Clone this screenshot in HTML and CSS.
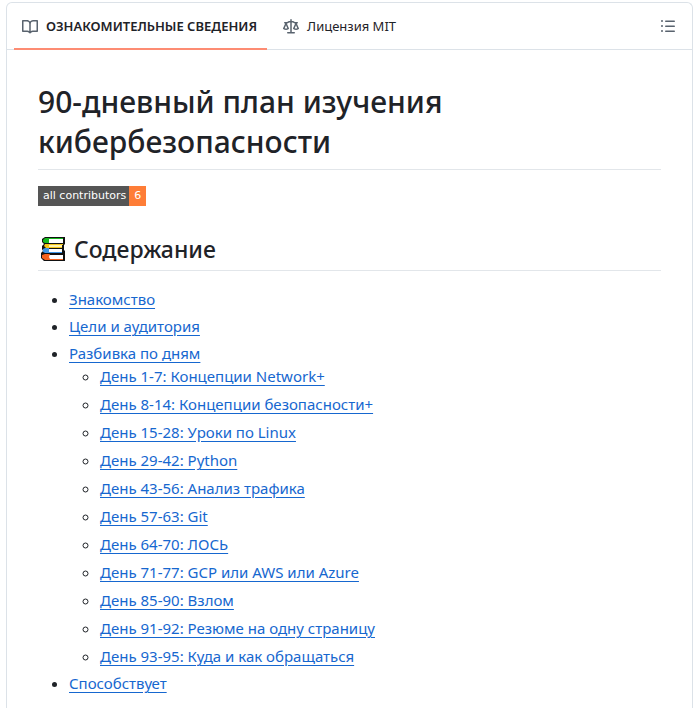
FILE: index.html
```
<!DOCTYPE html>
<html lang="ru">
<head>
    <meta charset="UTF-8">
    <meta name="viewport" content="width=device-width, initial-scale=1.0">
    <title>90-дневный план изучения кибербезопасности</title>
    <link rel="stylesheet" href="styles.css">
</head>
<body>
    <main class="readme">
        <header class="readme-header">
            <nav class="tabs">
                <a class="tab active" href="#readme">
                    <svg class="icon" viewBox="0 0 16 16" aria-hidden="true"><path d="M0 1.75A.75.75 0 0 1 .75 1h4.253c1.227 0 2.317.59 3 1.501A3.743 3.743 0 0 1 11.006 1h4.245a.75.75 0 0 1 .75.75v10.5a.75.75 0 0 1-.75.75h-4.507a2.25 2.25 0 0 0-1.591.659l-.622.621a.75.75 0 0 1-1.06 0l-.622-.621A2.25 2.25 0 0 0 5.258 13H.75a.75.75 0 0 1-.75-.75Zm7.251 10.324.004-5.073-.002-2.253A2.25 2.25 0 0 0 5.003 2.5H1.5v9h3.757a3.75 3.75 0 0 1 1.994.574ZM8.755 4.75l-.004 7.322a3.752 3.752 0 0 1 1.992-.572H14.5v-9h-3.495a2.25 2.25 0 0 0-2.25 2.25Z"/></svg>
                    <span>ОЗНАКОМИТЕЛЬНЫЕ СВЕДЕНИЯ</span>
                </a>
                <a class="tab" href="#license">
                    <svg class="icon" viewBox="0 0 16 16" aria-hidden="true"><path d="M8.75.75V2h.985c.304 0 .603.08.867.231l1.29.736c.038.022.08.033.124.033h2.234a.75.75 0 0 1 0 1.5h-.427l2.111 4.692a.75.75 0 0 1-.154.838l-.53-.53.529.531-.001.002-.002.002-.006.006-.006.005-.01.01-.045.04c-.21.176-.441.327-.686.45C14.556 10.78 13.88 11 13 11a4.498 4.498 0 0 1-2.023-.454 3.544 3.544 0 0 1-.686-.45l-.045-.04-.016-.015-.006-.006-.004-.004v-.001a.75.75 0 0 1-.154-.838L12.178 4.5h-.162c-.305 0-.604-.079-.868-.231l-1.29-.736a.245.245 0 0 0-.124-.033H8.75V13h2.5a.75.75 0 0 1 0 1.5h-6.5a.75.75 0 0 1 0-1.5h2.5V3.5h-.984a.245.245 0 0 0-.124.033l-1.289.737c-.265.15-.564.23-.869.23h-.162l2.112 4.692a.75.75 0 0 1-.154.838l-.53-.53.529.531-.001.002-.002.002-.006.006-.016.015-.045.04c-.21.176-.441.327-.686.45C4.556 10.78 3.88 11 3 11a4.498 4.498 0 0 1-2.023-.454 3.544 3.544 0 0 1-.686-.45l-.045-.04-.016-.015-.006-.006-.004-.004v-.001a.75.75 0 0 1-.154-.838L2.178 4.5H1.75a.75.75 0 0 1 0-1.5h2.234a.249.249 0 0 0 .125-.033l1.288-.737c.265-.15.564-.23.869-.23h.984V.75a.75.75 0 0 1 1.5 0Zm2.945 8.477c.285.135.718.273 1.305.273s1.02-.138 1.305-.273L13 6.327Zm-10 0c.285.135.718.273 1.305.273s1.02-.138 1.305-.273L3 6.327Z"/></svg>
                    <span>Лицензия MIT</span>
                </a>
            </nav>
            <button class="outline-button" type="button" aria-label="Содержание">
                <svg class="icon" viewBox="0 0 16 16" aria-hidden="true"><path d="M5.75 2.5h8.5a.75.75 0 0 1 0 1.5h-8.5a.75.75 0 0 1 0-1.5Zm0 5h8.5a.75.75 0 0 1 0 1.5h-8.5a.75.75 0 0 1 0-1.5Zm0 5h8.5a.75.75 0 0 1 0 1.5h-8.5a.75.75 0 0 1 0-1.5ZM2 14a1 1 0 1 1 0-2 1 1 0 0 1 0 2Zm1-6a1 1 0 1 1-2 0 1 1 0 0 1 2 0ZM2 4a1 1 0 1 1 0-2 1 1 0 0 1 0 2Z"/></svg>
            </button>
        </header>

        <article class="content" id="readme">
            <h1>90-дневный план изучения кибербезопасности</h1>

            <a class="badge" href="#contributors">
                <span class="badge-label">all contributors</span>
                <span class="badge-count">6</span>
            </a>

            <h2>
                <svg class="books" viewBox="0 0 26 26" aria-hidden="true">
                    <path d="M5 1h20v7l-1 1v5l1 1v10H4l-3-3v-5l2-2-1-2v-3l2-2-2-2V3z" fill="#111"/>
                    <path d="M9 3h14v4H9z" fill="#fff"/>
                    <path d="M5 2h4v5H5L3 6V4z" fill="#16b81f"/>
                    <path d="M5 2h18v1H5z" fill="#16b81f"/>
                    <path d="M9 9h13v2H9z" fill="#fff3b0"/>
                    <path d="M5 8h18v1H9v2h13v1H6L4 10z" fill="#f5c518"/>
                    <path d="M9 13h13v3H9z" fill="#fff"/>
                    <path d="M5 12h4v5H5l-2-1v-3z" fill="#3d95e6"/>
                    <path d="M8 16h14v1H8z" fill="#3d95e6"/>
                    <path d="M9 19h14v4H9z" fill="#fff"/>
                    <path d="M5 18h5l-1 3 1 2h13v1H5l-3-2v-3z" fill="#f4611e"/>
                </svg>
                <span>Содержание</span>
            </h2>

            <ul class="toc">
                <li><a href="#intro">Знакомство</a></li>
                <li><a href="#goals">Цели и аудитория</a></li>
                <li>
                    <a href="#days">Разбивка по дням</a>
                    <ul class="days">
                        <li><a href="#day-1">День 1-7: Концепции Network+</a></li>
                        <li><a href="#day-8">День 8-14: Концепции безопасности+</a></li>
                        <li><a href="#day-15">День 15-28: Уроки по Linux</a></li>
                        <li><a href="#day-29">День 29-42: Python</a></li>
                        <li><a href="#day-43">День 43-56: Анализ трафика</a></li>
                        <li><a href="#day-57">День 57-63: Git</a></li>
                        <li><a href="#day-64">День 64-70: ЛОСЬ</a></li>
                        <li><a href="#day-71">День 71-77: GCP или AWS или Azure</a></li>
                        <li><a href="#day-85">День 85-90: Взлом</a></li>
                        <li><a href="#day-91">День 91-92: Резюме на одну страницу</a></li>
                        <li><a href="#day-93">День 93-95: Куда и как обращаться</a></li>
                    </ul>
                </li>
                <li><a href="#contributing">Способствует</a></li>
            </ul>
        </article>
    </main>
</body>
</html>
```
FILE: styles.css
```
* {
    box-sizing: border-box;
}

body {
    margin: 0;
    padding: 2px 7px 0 6px;
    background-color: #fff;
    color: #1f2328;
    font-family: "Noto Sans", "Open Sans", sans-serif;
    font-size: 15px;
    line-height: 23px;
}

.readme {
    min-height: calc(100vh - 2px);
    border: 1px solid #dce2e8;
    border-bottom: none;
    border-radius: 6px 6px 0 0;
}

.readme-header {
    display: flex;
    justify-content: space-between;
    height: 47px;
    padding: 0 8px 0 7px;
    border-bottom: 1px solid #dce2e8;
}

.tabs {
    display: flex;
    gap: 8px;
}

.tab {
    display: flex;
    align-items: center;
    gap: 8px;
    height: 47px;
    padding: 2px 8px 0;
    border-bottom: 2px solid transparent;
    color: #1f2328;
    font-size: 13px;
    text-decoration: none;
    white-space: nowrap;
}

.tab.active {
    padding-right: 10px;
    border-bottom-color: #fd8c73;
    font-weight: 600;
}

.icon {
    flex: none;
    width: 16px;
    height: 16px;
    fill: #59636e;
}

.outline-button {
    display: flex;
    align-items: center;
    justify-content: center;
    width: 32px;
    padding: 0;
    border: none;
    background: none;
    cursor: pointer;
}

.content {
    padding: 32px 31px 0;
}

h1,
h2 {
    margin: 0;
    border-bottom: 1px solid #e2e6ea;
}

h1 {
    padding-bottom: 7px;
    font-size: 30px;
    font-weight: 500;
    line-height: 40px;
}

.badge {
    display: flex;
    width: fit-content;
    margin: 16px 0 27px;
    color: #fff;
    font-family: "DejaVu Sans", sans-serif;
    font-size: 11px;
    line-height: 20px;
    text-decoration: none;
}

.badge-label {
    padding: 0 3px 0 5px;
    background-color: #555;
}

.badge-count {
    padding: 0 5px;
    background-color: #fe7d37;
}

h2 {
    display: flex;
    align-items: center;
    gap: 8px;
    padding: 0 2px 5px;
    font-size: 23px;
    font-weight: 500;
    line-height: 32px;
}

.books {
    width: 26px;
    height: 26px;
}

ul {
    margin: 0;
    padding-left: 31px;
}

.toc {
    margin-top: 17px;
}

.toc > li + li {
    margin-top: 4px;
}

.days > li + li {
    margin-top: 5px;
}

.toc a {
    color: #1667cf;
    text-underline-offset: 3px;
}
```
